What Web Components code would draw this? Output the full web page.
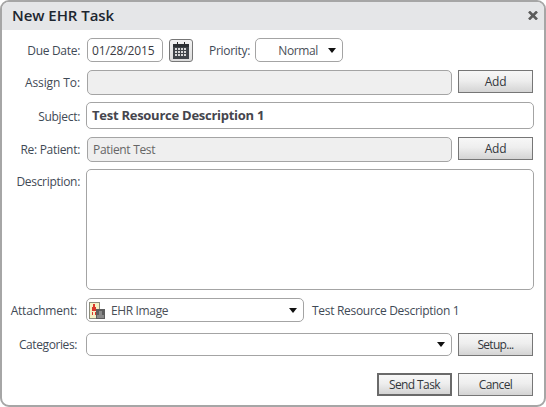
<!DOCTYPE html>
<html>
<head>
<meta charset="utf-8">
<title>New EHR Task</title>
<style>
  html, body { margin: 0; padding: 0; background: #fff; }
  body { font-family: "Open Sans", "Noto Sans", sans-serif; }
</style>
</head>
<body>

<task-dialog heading="New EHR Task">
  <form-row label="Due Date:" style="--h:24px">
    <text-field value="01/28/2015" style="width:76px;margin-left:1px;--inset:4px;--tracking:-.12px"></text-field>
    <calendar-button></calendar-button>
    <span style="margin-left:10px;font-size:12px;color:#3f4a56;letter-spacing:-.3px">Priority:</span>
    <drop-select value="Normal" centered style="width:88px;margin-left:-1px"></drop-select>
  </form-row>
  <form-row label="Assign To:" style="--h:25px;--top:8px;--label-track:-.1px">
    <text-field disabled style="flex:1;margin-left:1px"></text-field>
    <push-button style="margin-right:1px">Add</push-button>
  </form-row>
  <form-row label="Subject:" style="--h:27px;--top:7px;--label-down:1px">
    <text-field value="Test Resource Description 1" bold style="flex:1"></text-field>
  </form-row>
  <form-row label="Re: Patient:" style="--h:25px;--top:8px">
    <text-field value="Patient Test" disabled style="flex:1;margin-left:1px;--tracking:-.32px"></text-field>
    <push-button style="margin-right:1px">Add</push-button>
  </form-row>
  <form-row label="Description:" style="--h:121px;--top:7px" top>
    <text-field style="flex:1"></text-field>
  </form-row>
  <form-row label="Attachment:" style="--h:24px;--top:8px;--label-end:3px;--label-track:-.2px">
    <drop-select value="EHR Image" style="width:218px">
      <ehr-image-icon slot="icon"></ehr-image-icon>
    </drop-select>
    <span style="margin-left:2px;font-size:12px;color:#3f4a56;letter-spacing:-.3px">Test Resource Description 1</span>
  </form-row>
  <form-row label="Categories:" style="--h:23px;--top:11px;--label-end:3px;--label-track:-.4px">
    <drop-select style="flex:1"></drop-select>
    <push-button style="margin-right:1px;--btn-track:-.7px">Setup...</push-button>
  </form-row>
  <task-actions>
    <push-button primary style="--btn-track:-.6px">Send Task</push-button>
    <push-button style="--btn-track:-.6px">Cancel</push-button>
  </task-actions>
</task-dialog>

<script>
const baseFont = `
  font-family: "Open Sans", "Noto Sans", sans-serif;
  font-size: 12px;
  letter-spacing: -.3px;
`;

class TaskDialog extends HTMLElement {

  constructor() {

    super();
    this.attachShadow({ mode: 'open' });
  }

  connectedCallback() {

    this.shadowRoot.innerHTML = `
      <style>
        :host {
          display: flex;
          flex-direction: column;
          box-sizing: border-box;
          width: 546px;
          height: 407px;
          border: 2px solid #a6a6a6;
          border-radius: 9px;
          background: #fff;
          overflow: hidden;
        }
        header {
          display: flex;
          align-items: center;
          justify-content: space-between;
          flex: none;
          box-sizing: border-box;
          height: 28px;
          padding: 0 6px 2px 10px;
          background: #e5e6e8;
        }
        h1 {
          margin: 0;
          font: 600 15px "Open Sans", "Noto Sans", sans-serif;
          letter-spacing: -.05px;
          color: #1d2630;
        }
        svg { display: block; }
        main {
          display: flex;
          flex-direction: column;
          padding: 8px 10px 0 0;
        }
      </style>
      <header>
        <h1>${this.getAttribute('heading')}</h1>
        <svg width="10" height="9" viewBox="0 0 10 9"><path d="M1 .5l8 8M9 .5l-8 8" stroke="#5c5c5c" stroke-width="2.6"/></svg>
      </header>
      <main><slot></slot></main>
    `;
  }
}

class FormRow extends HTMLElement {

  constructor() {

    super();
    this.attachShadow({ mode: 'open' });
  }

  connectedCallback() {

    const alignTop = this.hasAttribute('top');
    this.shadowRoot.innerHTML = `
      <style>
        :host {
          display: grid;
          grid-template-columns: 78px 1fr;
          column-gap: 6px;
          height: var(--h, 24px);
          margin-top: var(--top, 0);
        }
        label {
          ${baseFont}
          letter-spacing: var(--label-track, -.3px);
          color: #3f4a56;
          text-align: right;
          white-space: nowrap;
          align-self: ${alignTop ? 'start' : 'center'};
          padding-right: var(--label-end, 0);
          padding-top: ${alignTop ? '4px' : 'var(--label-down, 0)'};
        }
        div {
          display: flex;
          align-items: flex-start;
          gap: 6px;
          min-width: 0;
          height: 100%;
        }
        div ::slotted(span) {
          align-self: center;
        }
      </style>
      <label>${this.getAttribute('label')}</label>
      <div><slot></slot></div>
    `;
  }
}

class TextField extends HTMLElement {

  constructor() {

    super();
    this.attachShadow({ mode: 'open' });
  }

  connectedCallback() {

    const disabled = this.hasAttribute('disabled');
    const bold = this.hasAttribute('bold');
    this.shadowRoot.innerHTML = `
      <style>
        :host {
          display: flex;
          align-items: center;
          box-sizing: border-box;
          height: 100%;
          padding: 0 var(--inset, 5px) ${bold ? '2px' : '0'};
          border: 1px solid #a4a4a4;
          border-radius: 5px;
          background: ${disabled ? '#efefef' : '#fff'};
          ${baseFont}
          color: ${disabled ? '#666' : bold ? '#45454d' : '#3a3a42'};
          white-space: nowrap;
          overflow: hidden;
        }
        span {
          letter-spacing: ${bold ? '-.26px' : 'var(--tracking, -.2px)'};
          font-weight: ${bold ? '700' : '400'};
          font-size: ${bold ? '13px' : '12px'};
        }
      </style>
      <span>${this.getAttribute('value') || ''}</span>
    `;
  }
}

class PushButton extends HTMLElement {

  constructor() {

    super();
    this.attachShadow({ mode: 'open' });
  }

  connectedCallback() {

    const primary = this.hasAttribute('primary');
    this.shadowRoot.innerHTML = `
      <style>
        :host {
          display: flex;
          align-items: center;
          justify-content: center;
          flex: none;
          box-sizing: border-box;
          width: 75px;
          height: 23px;
          border: ${primary ? '2px solid #6a6a6a' : '1px solid #767676'};
          background: linear-gradient(#f7f7f7, #eeeeee 45%, #d4d4d4);
          ${baseFont}
          letter-spacing: var(--btn-track, -.3px);
          color: #33373c;
        }
      </style>
      <slot></slot>
    `;
  }
}

class DropSelect extends HTMLElement {

  constructor() {

    super();
    this.attachShadow({ mode: 'open' });
  }

  connectedCallback() {

    const centered = this.hasAttribute('centered');
    this.shadowRoot.innerHTML = `
      <style>
        :host {
          display: flex;
          align-items: center;
          box-sizing: border-box;
          height: 100%;
          padding: 0 6px 0 2px;
          border: 1px solid #a4a4a4;
          border-radius: 5px;
          background: #fff;
          ${baseFont}
          letter-spacing: -.36px;
          color: #4a4f57;
          white-space: nowrap;
        }
        span {
          flex: 1;
          ${centered ? 'text-align: right; padding-right: 10px;' : 'padding-left: 6px;'}
        }
        svg { flex: none; }
      </style>
      <slot name="icon"></slot>
      <span>${this.getAttribute('value') || ''}</span>
      <svg width="8" height="5" viewBox="0 0 8 5"><path d="M0 0h8L4 5z" fill="#111"/></svg>
    `;
  }
}

class CalendarButton extends HTMLElement {

  constructor() {

    super();
    this.attachShadow({ mode: 'open' });
  }

  connectedCallback() {

    this.shadowRoot.innerHTML = `
      <style>
        :host {
          display: flex;
          align-items: center;
          justify-content: center;
          flex: none;
          box-sizing: border-box;
          width: 24px;
          height: 23px;
          margin-top: 1px;
          border: 1px solid #777;
          border-radius: 3px;
          background: linear-gradient(#f2f2f2, #dcdcdc);
        }
        svg { display: block; }
      </style>
      <svg width="16" height="17" viewBox="0 0 16 17" shape-rendering="crispEdges">
        <path d="M4 0h1v3H4zM11 0h1v3h-1z" fill="#2a2a2a"/>
        <path d="M0 2h16v3H0z" fill="#2b2f33"/>
        <path d="M0 5h16v12H0z" fill="#40454a"/>
        <path d="M2 6h2v2H2zM5 6h2v2H5zM8 6h2v2H8zM11 6h2v2h-2zM2 9h2v2H2zM5 9h2v2H5zM8 9h2v2H8zM11 9h2v2h-2zM2 12h2v2H2zM5 12h2v2H5zM8 12h2v2H8zM11 12h2v2h-2z" fill="#d8d8d8"/>
      </svg>
    `;
  }
}

class EhrImageIcon extends HTMLElement {

  constructor() {

    super();
    this.attachShadow({ mode: 'open' });
  }

  connectedCallback() {

    this.shadowRoot.innerHTML = `
      <style>
        :host { display: block; flex: none; width: 16px; height: 17px; }
        svg { display: block; }
      </style>
      <svg width="16" height="17" viewBox="0 0 16 17" shape-rendering="crispEdges">
        <path d="M0 0h11v17H0z" fill="#8b8b7c"/>
        <path d="M1 1h9v15H1z" fill="#f5efc4"/>
        <path d="M4 2h2v3H4zM3 5h4v4H3zM3 10h1v3H3zM6 10h1v3H6z" fill="#d8362a"/>
        <path d="M7 7h9v10H7z" fill="#5d5d5d"/>
        <path d="M10 9h3v7h-3zM8 13h7v3H8z" fill="#8a8a8a"/>
      </svg>
    `;
  }
}

class TaskActions extends HTMLElement {

  constructor() {

    super();
    this.attachShadow({ mode: 'open' });
  }

  connectedCallback() {

    this.shadowRoot.innerHTML = `
      <style>
        :host {
          display: flex;
          justify-content: flex-end;
          gap: 6px;
          margin-top: 17px;
          padding-right: 1px;
        }
      </style>
      <slot></slot>
    `;
  }
}

customElements.define('task-dialog', TaskDialog);
customElements.define('form-row', FormRow);
customElements.define('text-field', TextField);
customElements.define('push-button', PushButton);
customElements.define('drop-select', DropSelect);
customElements.define('calendar-button', CalendarButton);
customElements.define('ehr-image-icon', EhrImageIcon);
customElements.define('task-actions', TaskActions);
</script>
</body>
</html>
